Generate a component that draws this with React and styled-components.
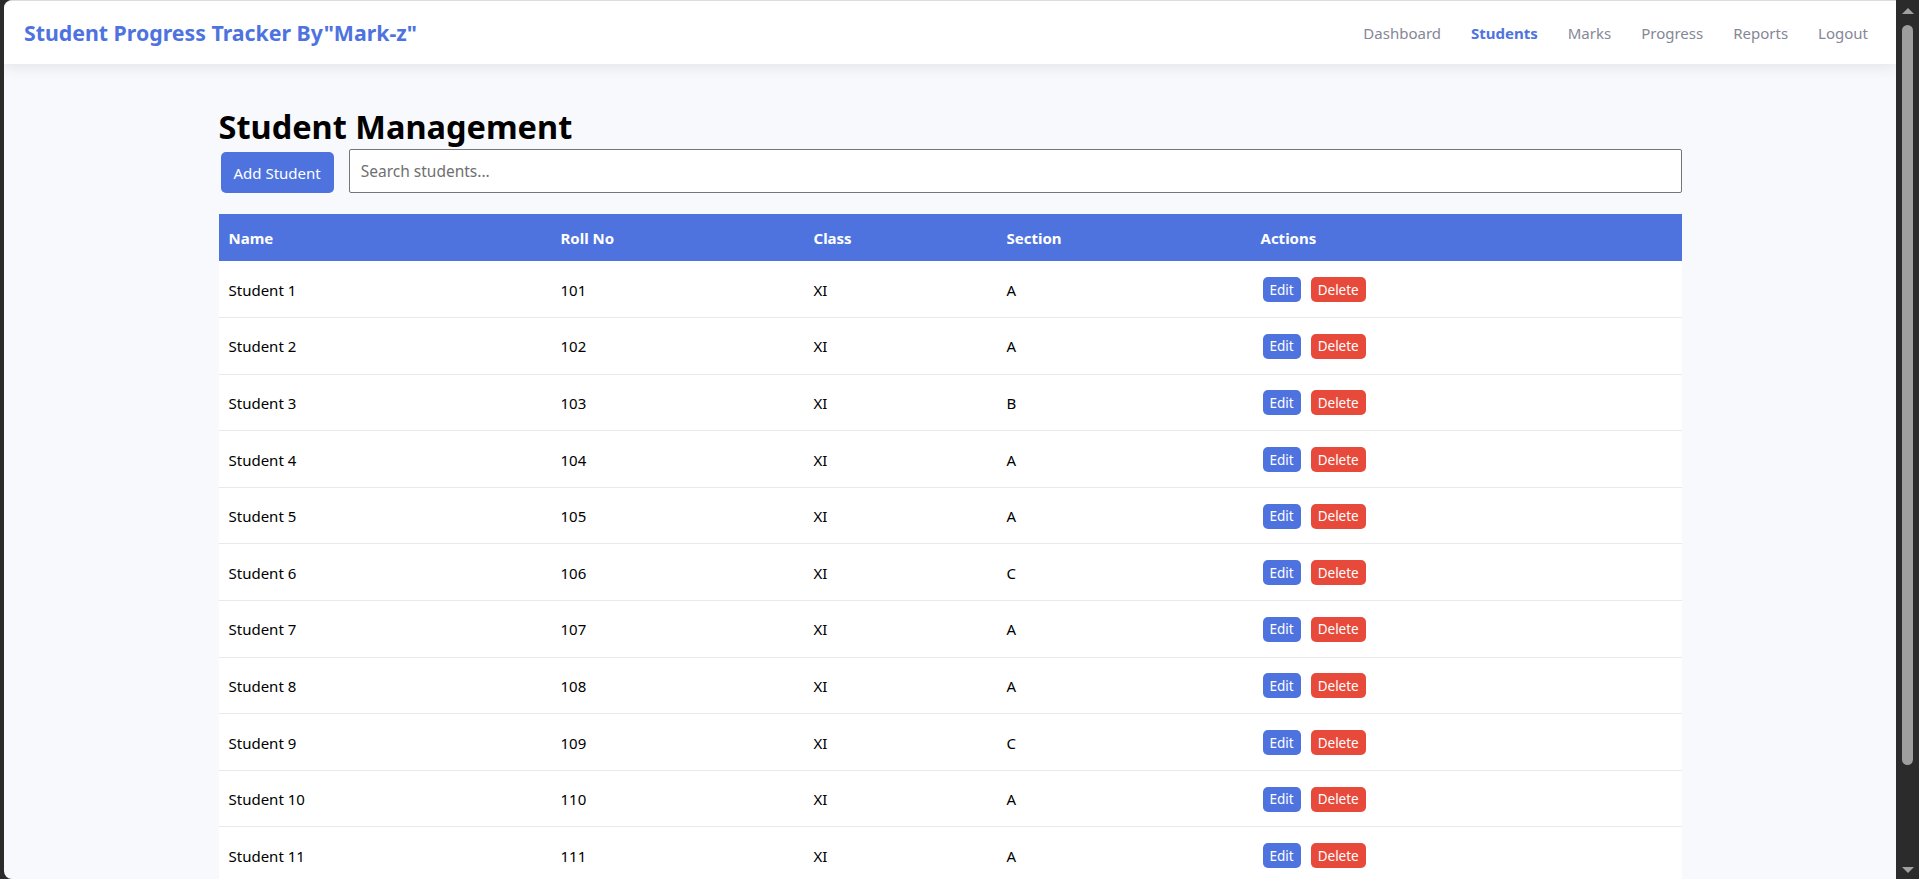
import React from 'react';
import styled, { createGlobalStyle } from 'styled-components';

const GlobalStyle = createGlobalStyle`
  html, body {
    margin: 0;
    padding: 0;
    height: 100%;
    overflow: hidden;
    background: #2b2b2b;
  }

  body {
    font-family: "Noto Sans", "Open Sans", sans-serif;
    color: #000;
  }

  * {
    box-sizing: border-box;
  }
`;

const Shell = styled.div`
  display: flex;
  height: 100vh;
`;

const Window = styled.div`
  flex: 1;
  margin-left: 4px;
  border-top: 1px solid #dcdcdc;
  border-radius: 8px 0 0 8px;
  background: #f8f9fc;
  overflow: hidden;
`;

const ScrollTrack = styled.div`
  width: 23px;
  display: flex;
  flex-direction: column;
  align-items: center;
  padding: 8px 0 6px;
  background: #2b2b2b;
`;

const Arrow = styled.div`
  width: 0;
  height: 0;
  border-left: 6px solid transparent;
  border-right: 6px solid transparent;
  ${(p) => (p.down ? 'border-top: 6px solid #a0a0a0;' : 'border-bottom: 6px solid #a0a0a0;')}
`;

const Thumb = styled.div`
  width: 11px;
  height: 740px;
  margin: 11px 0 auto;
  border-radius: 6px;
  background: #9e9e9e;
`;

const Navbar = styled.nav`
  height: 63px;
  display: flex;
  align-items: center;
  justify-content: space-between;
  padding: 0 28px 0 20px;
  background: #fff;
  box-shadow: 0 3px 14px rgba(0, 0, 0, 0.09);
  position: relative;
`;

const Brand = styled.div`
  font-size: 21.3px;
  font-weight: 700;
  color: #4e73df;
`;

const NavLinks = styled.div`
  display: flex;
  gap: 30px;
`;

const NavLink = styled.a`
  font-size: 15px;
  color: ${(p) => (p.active ? '#4e73df' : '#858796')};
  font-weight: ${(p) => (p.active ? 700 : 400)};
  text-decoration: none;
  cursor: pointer;
`;

const Main = styled.main`
  max-width: 1463px;
  margin: 0 auto;
  padding-top: 44px;
`;

const Heading = styled.h1`
  margin: 0 0 3px;
  font-size: 32.5px;
  line-height: 38px;
  font-weight: 700;
`;

const Toolbar = styled.div`
  display: flex;
  align-items: flex-end;
  gap: 15px;
  margin-bottom: 21px;
`;

const AddButton = styled.button`
  height: 41px;
  margin-left: 2px;
  padding: 0 13px;
  border: none;
  border-radius: 5px;
  background: #4e73df;
  color: #fff;
  font-family: inherit;
  font-size: 15px;
  cursor: pointer;
`;

const SearchInput = styled.input`
  flex: 1;
  height: 44px;
  padding: 0 11px;
  border: 1px solid #767676;
  border-radius: 2px;
  background: #fff;
  font-family: inherit;
  font-size: 15.5px;
  color: #333;

  &::placeholder {
    color: #707070;
  }
`;

const Table = styled.table`
  width: 100%;
  border-collapse: collapse;
  table-layout: fixed;
  background: #fff;

  th {
    height: 47px;
    padding: 0 10px;
    background: #4e73df;
    color: #fff;
    font-size: 15px;
    font-weight: 700;
    text-align: left;
  }

  td {
    height: 56.6px;
    padding: 1px 10px 0;
    border-bottom: 1px solid #e9e9ec;
    font-size: 15px;
    vertical-align: middle;
  }
`;

const ActionButton = styled.button`
  height: 25px;
  margin: 0 ${(p) => (p.danger ? '0' : '10px')} 0 ${(p) => (p.danger ? '0' : '2px')};
  padding: 0 7px;
  border: none;
  border-radius: 5px;
  background: ${(p) => (p.danger ? '#e74a3b' : '#4e73df')};
  color: #fff;
  font-family: inherit;
  font-size: 13.5px;
  cursor: pointer;
`;

const links = ['Dashboard', 'Students', 'Marks', 'Progress', 'Reports', 'Logout'];

const sections = ['A', 'A', 'B', 'A', 'A', 'C', 'A', 'A', 'C', 'A', 'A'];

const students = sections.map((section, i) => ({
  id: i + 1,
  name: `Student ${i + 1}`,
  roll: 101 + i,
  cls: 'XI',
  section,
}));

const App = () => {
  return (
    <>
      <GlobalStyle />
      <Shell>
        <Window>
          <Navbar>
            <Brand>Student Progress Tracker By"Mark-z"</Brand>
            <NavLinks>
              {links.map((l) => (
                <NavLink key={l} active={l === 'Students'}>
                  {l}
                </NavLink>
              ))}
            </NavLinks>
          </Navbar>

          <Main>
            <Heading>Student Management</Heading>
            <Toolbar>
              <AddButton>Add Student</AddButton>
              <SearchInput placeholder="Search students..." />
            </Toolbar>

            <Table>
              <colgroup>
                <col style={{ width: 332 }} />
                <col style={{ width: 253 }} />
                <col style={{ width: 193 }} />
                <col style={{ width: 254 }} />
                <col />
              </colgroup>
              <thead>
                <tr>
                  <th>Name</th>
                  <th>Roll No</th>
                  <th>Class</th>
                  <th>Section</th>
                  <th>Actions</th>
                </tr>
              </thead>
              <tbody>
                {students.map((s) => (
                  <tr key={s.id}>
                    <td>{s.name}</td>
                    <td>{s.roll}</td>
                    <td>{s.cls}</td>
                    <td>{s.section}</td>
                    <td>
                      <ActionButton>Edit</ActionButton>
                      <ActionButton danger>Delete</ActionButton>
                    </td>
                  </tr>
                ))}
              </tbody>
            </Table>
          </Main>
        </Window>
        <ScrollTrack>
          <Arrow />
          <Thumb />
          <Arrow down />
        </ScrollTrack>
      </Shell>
    </>
  );
};

export default App;
